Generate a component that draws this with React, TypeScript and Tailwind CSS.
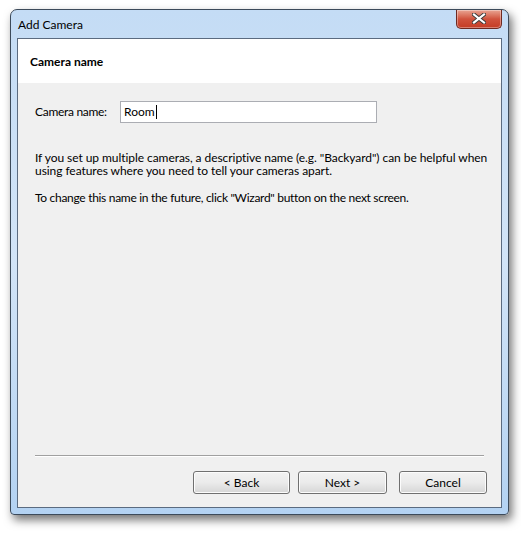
import React from "react";

const font = { fontFamily: 'Lato, "Liberation Sans", sans-serif' };

const WinButton: React.FC<{ label: string; width: string }> = ({ label, width }) => (
  <button
    className={`h-[23px] ${width} rounded-[3px] border border-[#707070] bg-gradient-to-b from-[#f2f2f2] via-[#ebebeb] to-[#d6d6d6] text-[12px] text-black shadow-[inset_0_0_0_1px_#fcfcfc]`}
  >
    {label}
  </button>
);

export default function App() {
  return (
    <div className="min-h-[534px] w-[521px] bg-white pl-[10px] pt-[9px]" style={font}>
      {/* window frame */}
      <div className="flex h-[506px] w-[499px] flex-col rounded-t-[7px] rounded-b-[4px] border border-[#3c4a5a] bg-gradient-to-b from-[#c4dcf5] via-[#d2e4f7] to-[#b3d2f2] px-[6px] pb-[6px] shadow-[3px_5px_10px_rgba(0,0,0,0.55)]">
        {/* title bar */}
        <div className="flex h-[28px] items-center justify-between">
          <span className="pl-[1px] pt-[1px] text-[12px] text-black">Add Camera</span>
          <button className="mb-[10px] flex h-[19px] w-[46px] items-center justify-center rounded-b-[5px] border border-t-0 border-[#6e2a22] bg-gradient-to-b from-[#e8a493] via-[#d0523d] to-[#c43b24] shadow-[inset_0_0_0_1px_rgba(255,255,255,0.35)]">
            <svg width="14" height="11" viewBox="0 0 14 11">
              <path
                d="M2 1.5 L12 9.5 M12 1.5 L2 9.5"
                stroke="#3a3a3a"
                strokeWidth="4"
                strokeLinecap="square"
              />
              <path
                d="M2 1.5 L12 9.5 M12 1.5 L2 9.5"
                stroke="#ffffff"
                strokeWidth="2.2"
                strokeLinecap="square"
              />
            </svg>
          </button>
        </div>

        {/* client area */}
        <div className="flex flex-1 flex-col border border-[#5b6b80] bg-[#f0f0f0]">
          <div className="flex h-[44px] items-center bg-white pl-[12px] pt-[2px]">
            <span className="text-[12px] font-bold text-black">Camera name</span>
          </div>

          <div className="flex flex-1 flex-col px-[17px]">
            <div className="mt-[18px] flex items-center">
              <span className="w-[85px] whitespace-nowrap text-[12px] tracking-[-0.3px] text-black">Camera name:</span>
              <div className="flex h-[22px] w-[257px] items-center border border-[#abadb3] bg-white pl-[3px] text-[12px] text-black">
                Room
                <span className="ml-[1px] inline-block h-[14px] w-[1px] bg-black" />
              </div>
            </div>

            <p className="mt-[28px] whitespace-nowrap text-[12px] leading-[13px] tracking-[-0.06px] text-black">
              If you set up multiple cameras, a descriptive name (e.g. "Backyard") can be helpful when
              <br />
              using features where you need to tell your cameras apart.
            </p>
            <p className="mt-[14px] whitespace-nowrap text-[12px] leading-[13px] tracking-[-0.3px] text-black">
              To change this name in the future, click "Wizard" button on the next screen.
            </p>

            <div className="mt-auto border-t border-[#a0a0a0] border-b border-b-white" />

            <div className="-mr-[3px] mb-[13px] mt-[14px] flex justify-end">
              <WinButton label="< Back" width="w-[97px]" />
              <div className="w-[8px]" />
              <WinButton label="Next >" width="w-[89px]" />
              <div className="w-[12px]" />
              <WinButton label="Cancel" width="w-[88px]" />
            </div>
          </div>
        </div>
      </div>
    </div>
  );
}
